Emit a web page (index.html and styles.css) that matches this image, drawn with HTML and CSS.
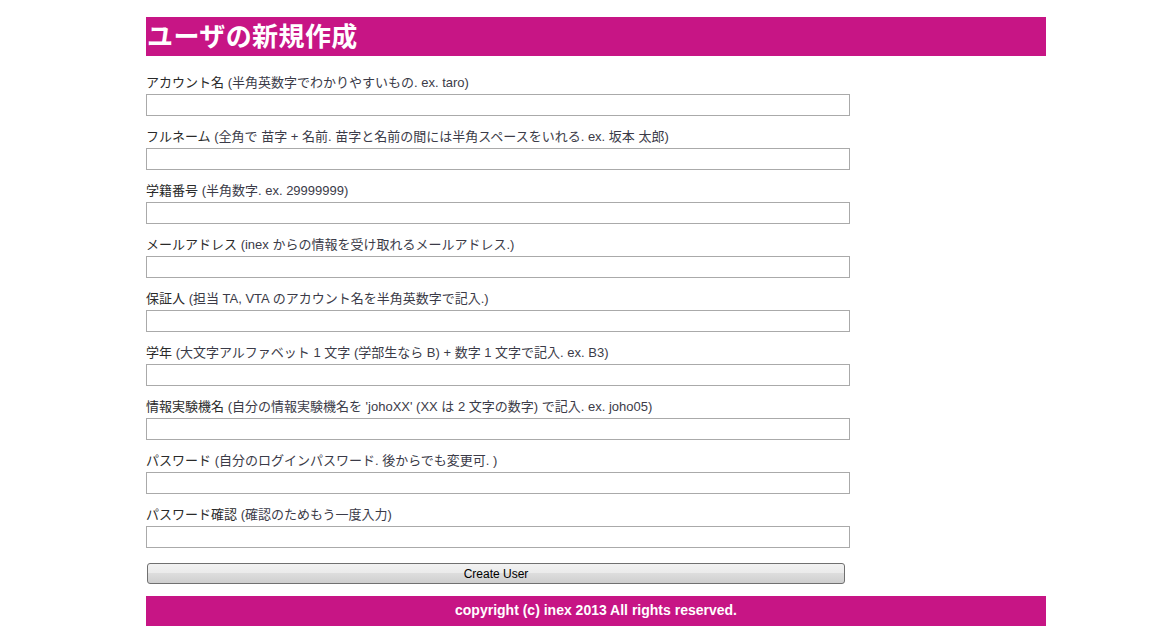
FILE: index.html
```html
<!DOCTYPE html>
<html lang="ja">
<head>
    <meta charset="utf-8">
    <title>ユーザの新規作成</title>
    <link rel="stylesheet" href="styles.css">
</head>
<body>

    <div class="page">
        <h1 class="title">ユーザの新規作成</h1>

        <form class="form" action="#" onsubmit="return false">
            <div class="field">
                <label for="account">アカウント名 <span class="note">(半角英数字でわかりやすいもの. ex. taro)</span></label>
                <input class="text" id="account" type="text">
            </div>
            <div class="field">
                <label for="fullname">フルネーム <span class="note">(全角で 苗字 + 名前. 苗字と名前の間には半角スペースをいれる. ex. 坂本 太郎)</span></label>
                <input class="text" id="fullname" type="text">
            </div>
            <div class="field">
                <label for="student">学籍番号 <span class="note">(半角数字. ex. 29999999)</span></label>
                <input class="text" id="student" type="text">
            </div>
            <div class="field">
                <label for="mail">メールアドレス <span class="note">(inex からの情報を受け取れるメールアドレス.)</span></label>
                <input class="text" id="mail" type="text">
            </div>
            <div class="field">
                <label for="guarantor">保証人 <span class="note">(担当 TA, VTA のアカウント名を半角英数字で記入.)</span></label>
                <input class="text" id="guarantor" type="text">
            </div>
            <div class="field">
                <label for="grade">学年 <span class="note">(大文字アルファベット 1 文字 (学部生なら B) + 数字 1 文字で記入. ex. B3)</span></label>
                <input class="text" id="grade" type="text">
            </div>
            <div class="field">
                <label for="machine">情報実験機名 <span class="note">(自分の情報実験機名を 'johoXX' (XX は 2 文字の数字) で記入. ex. joho05)</span></label>
                <input class="text" id="machine" type="text">
            </div>
            <div class="field">
                <label for="password">パスワード <span class="note">(自分のログインパスワード. 後からでも変更可. )</span></label>
                <input class="text" id="password" type="password">
            </div>
            <div class="field">
                <label for="confirm">パスワード確認 <span class="note">(確認のためもう一度入力)</span></label>
                <input class="text" id="confirm" type="password">
            </div>

            <input class="submit-btn" type="submit" value="Create User">
        </form>

        <div class="footer">copyright (c) inex 2013 All rights reserved.</div>
    </div>

</body>
</html>
```

FILE: styles.css
```css
* {
    margin: 0;
    padding: 0;
    box-sizing: border-box;
}
body {
    background: #fff;
    font-family: "Liberation Sans", "Noto Sans CJK JP", sans-serif;
    font-size: 13px;
    color: #222;
}
.page {
    width: 900px;
    margin: 17px 0 0 146px;
}
.title {
    height: 39px;
    padding-left: 1px;
    background-color: #c71585;
    color: #fff;
    font-size: 26px;
    letter-spacing: 0.4px;
    font-weight: bold;
    line-height: 41px;
}
.form {
    padding-top: 18px;
}
.field {
    margin-bottom: 12px;
}
.field label {
    display: block;
    height: 18px;
    margin-bottom: 2px;
    line-height: 18px;
    color: #2a2a2a;
}
.note {
    color: #3b3b48;
}
.text {
    display: block;
    width: 704px;
    height: 22px;
    border: 1px solid #aaa;
    background: #fff;
    font-size: 13px;
    padding: 2px 4px;
    outline: none;
}
.submit-btn {
    display: block;
    width: 698px;
    height: 21px;
    margin: 15px 0 12px 1px;
    border: 1px solid #707070;
    border-radius: 3px;
    background: linear-gradient(#f2f2f2 0%, #ebebeb 45%, #dddddd 50%, #cfcfcf 100%);
    font-family: "Liberation Sans", Arial, sans-serif;
    font-size: 12px;
    color: #000;
    cursor: pointer;
}
.footer {
    height: 30px;
    background-color: #c71585;
    color: #fff;
    font-weight: bold;
    font-size: 14px;
    line-height: 29px;
    text-align: center;
}
```
